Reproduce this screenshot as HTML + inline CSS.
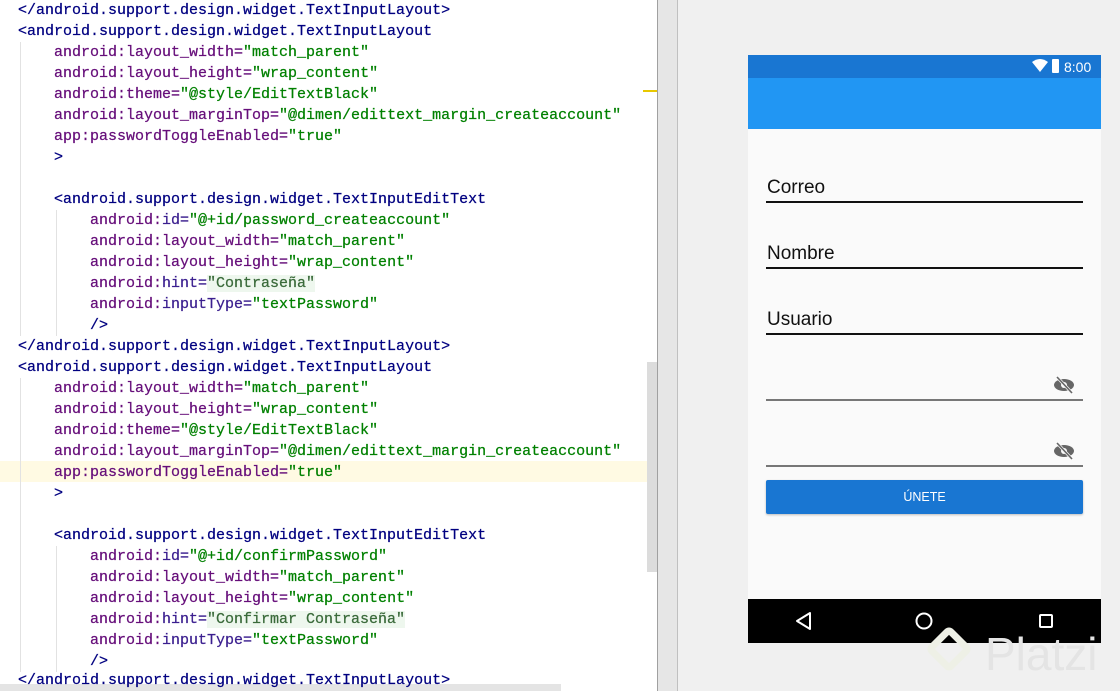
<!DOCTYPE html>
<html><head><meta charset="utf-8"><style>
*{margin:0;padding:0;box-sizing:border-box}
body{width:1120px;height:691px;overflow:hidden;background:#f0f0f0;position:relative;font-family:"Liberation Sans",sans-serif}
#code{position:absolute;left:0;top:0;width:657px;height:691px;background:#fff;overflow:hidden}
.l{position:absolute;left:18px;height:21px;line-height:21px;font-family:"Liberation Mono",monospace;font-size:15px;white-space:pre;color:#000;-webkit-text-stroke:0.25px;z-index:2}
.t{color:#000080}.a{color:#660e7a}.n{color:#3b1f8f}.v{color:#008000}.h{background:#eef7ee;color:#3a6a3a}
.g{position:absolute;width:1px;background:#e2e2e2}
.i1{left:54px}.i2{left:90px}
</style></head><body>
<div id="code">
<div style="position:absolute;left:0;top:461px;width:657px;height:21px;background:#fffae3"></div>
<div class="g" style="left:20px;top:42px;height:294px"></div>
<div class="g" style="left:20px;top:378px;height:294px"></div>
<div class="g" style="left:56px;top:210px;height:126px"></div>
<div class="g" style="left:56px;top:546px;height:126px"></div>
<div style="position:absolute;left:0;top:684px;width:561px;height:7px;background:#e4e4e4"></div>
<div class="l" style="top:0"><span class="t">&lt;/android.support.design.widget.TextInputLayout&gt;</span></div>
<div class="l" style="top:21px"><span class="t">&lt;android.support.design.widget.TextInputLayout</span></div>
<div class="l i1" style="top:42px"><span class="a">android:layout_width=</span><span class="v">"match_parent"</span></div>
<div class="l i1" style="top:63px"><span class="a">android:layout_height=</span><span class="v">"wrap_content"</span></div>
<div class="l i1" style="top:84px"><span class="a">android:theme=</span><span class="v">"@style/EditTextBlack"</span></div>
<div class="l i1" style="top:105px"><span class="a">android:layout_marginTop=</span><span class="v">"@dimen/edittext_margin_createaccount"</span></div>
<div class="l i1" style="top:126px"><span class="a">app:passwordToggleEnabled=</span><span class="v">"true"</span></div>
<div class="l i1" style="top:147px"><span class="t">&gt;</span></div>
<div class="l i1" style="top:189px"><span class="t">&lt;android.support.design.widget.TextInputEditText</span></div>
<div class="l i2" style="top:210px"><span class="a">android:</span><span class="n">id=</span><span class="v">"@+id/password_createaccount"</span></div>
<div class="l i2" style="top:231px"><span class="a">android:layout_width=</span><span class="v">"match_parent"</span></div>
<div class="l i2" style="top:252px"><span class="a">android:layout_height=</span><span class="v">"wrap_content"</span></div>
<div class="l i2" style="top:273px"><span class="a">android:</span><span class="n">hint=</span><span class="v h">"Contraseña"</span></div>
<div class="l i2" style="top:294px"><span class="a">android:</span><span class="n">inputType=</span><span class="v">"textPassword"</span></div>
<div class="l i2" style="top:315px"><span class="t">/&gt;</span></div>
<div class="l" style="top:336px"><span class="t">&lt;/android.support.design.widget.TextInputLayout&gt;</span></div>
<div class="l" style="top:357px"><span class="t">&lt;android.support.design.widget.TextInputLayout</span></div>
<div class="l i1" style="top:378px"><span class="a">android:layout_width=</span><span class="v">"match_parent"</span></div>
<div class="l i1" style="top:399px"><span class="a">android:layout_height=</span><span class="v">"wrap_content"</span></div>
<div class="l i1" style="top:420px"><span class="a">android:theme=</span><span class="v">"@style/EditTextBlack"</span></div>
<div class="l i1" style="top:441px"><span class="a">android:layout_marginTop=</span><span class="v">"@dimen/edittext_margin_createaccount"</span></div>
<div class="l i1" style="top:462px"><span class="a">app:passwordToggleEnabled=</span><span class="v">"true"</span></div>
<div class="l i1" style="top:483px"><span class="t">&gt;</span></div>
<div class="l i1" style="top:525px"><span class="t">&lt;android.support.design.widget.TextInputEditText</span></div>
<div class="l i2" style="top:546px"><span class="a">android:</span><span class="n">id=</span><span class="v">"@+id/confirmPassword"</span></div>
<div class="l i2" style="top:567px"><span class="a">android:layout_width=</span><span class="v">"match_parent"</span></div>
<div class="l i2" style="top:588px"><span class="a">android:layout_height=</span><span class="v">"wrap_content"</span></div>
<div class="l i2" style="top:609px"><span class="a">android:</span><span class="n">hint=</span><span class="v h">"Confirmar Contraseña"</span></div>
<div class="l i2" style="top:630px"><span class="a">android:</span><span class="n">inputType=</span><span class="v">"textPassword"</span></div>
<div class="l i2" style="top:651px"><span class="t">/&gt;</span></div>
<div class="l" style="top:670px"><span class="t">&lt;/android.support.design.widget.TextInputLayout&gt;</span></div>
<div style="position:absolute;left:643px;top:90px;width:14px;height:2px;background:#e8c800"></div>
<div style="position:absolute;left:647px;top:362px;width:10px;height:210px;background:#dcdcdc"></div>
</div>
<div style="position:absolute;left:657px;top:0;width:1px;height:691px;background:#a0a0a0"></div>
<div style="position:absolute;left:658px;top:0;width:19px;height:691px;background:#e6e6e6"></div>
<div style="position:absolute;left:677px;top:0;width:1px;height:691px;background:#c0c0c0"></div>

<div style="position:absolute;left:748px;top:55px;width:353px;height:588px;background:#fafafa">
  <div style="position:absolute;left:0;top:0;width:353px;height:23px;background:#1976d2"></div>
  <svg style="position:absolute;left:283px;top:4px" width="20" height="16" viewBox="0 0 20 16"><path d="M1 3 Q9 -3 17 3 L9 13 Z" fill="#fff"/></svg>
  <div style="position:absolute;left:304px;top:4px;width:7px;height:14px;background:#fff;border-radius:1px"></div>
  <div style="position:absolute;left:316px;top:2px;color:#fff;font-size:14px;line-height:20px">8:00</div>
  <div style="position:absolute;left:0;top:23px;width:353px;height:51px;background:#2196f3"></div>
  <div style="position:absolute;left:19px;top:122px;font-size:19px;color:#111">Correo</div>
  <div style="position:absolute;left:18px;top:146px;width:317px;height:1.5px;background:#111"></div>
  <div style="position:absolute;left:19px;top:188px;font-size:19px;color:#111">Nombre</div>
  <div style="position:absolute;left:18px;top:212px;width:317px;height:1.5px;background:#111"></div>
  <div style="position:absolute;left:19px;top:254px;font-size:19px;color:#111">Usuario</div>
  <div style="position:absolute;left:18px;top:278px;width:317px;height:1.5px;background:#111"></div>
  <svg style="position:absolute;left:305px;top:320px" width="22" height="20" viewBox="0 0 22 20"><ellipse cx="11" cy="10" rx="10" ry="6" fill="#666"/><circle cx="11" cy="10" r="3" fill="#fafafa"/><line x1="4" y1="2" x2="19" y2="18" stroke="#fafafa" stroke-width="3"/><line x1="4" y1="2" x2="19" y2="18" stroke="#666" stroke-width="1.6"/></svg>
  <div style="position:absolute;left:18px;top:344px;width:317px;height:2px;background:#777"></div>
  <svg style="position:absolute;left:305px;top:386px" width="22" height="20" viewBox="0 0 22 20"><ellipse cx="11" cy="10" rx="10" ry="6" fill="#666"/><circle cx="11" cy="10" r="3" fill="#fafafa"/><line x1="4" y1="2" x2="19" y2="18" stroke="#fafafa" stroke-width="3"/><line x1="4" y1="2" x2="19" y2="18" stroke="#666" stroke-width="1.6"/></svg>
  <div style="position:absolute;left:18px;top:410px;width:317px;height:2px;background:#777"></div>
  <div style="position:absolute;left:18px;top:425px;width:317px;height:34px;background:#1976d2;border-radius:2px;box-shadow:0 1px 2px rgba(0,0,0,.25);color:#fff;font-size:12.5px;text-align:center;line-height:34px">ÚNETE</div>
  <div style="position:absolute;left:0;top:544px;width:353px;height:44px;background:#000"></div>
  <svg style="position:absolute;left:0;top:544px" width="353" height="44" viewBox="0 0 353 44"><path d="M62 14 L49 22 L62 30 Z" fill="none" stroke="#fff" stroke-width="2" stroke-linejoin="round"/><circle cx="176" cy="22" r="7.5" fill="none" stroke="#fff" stroke-width="2"/><rect x="292" y="16" width="12" height="12" rx="1" fill="none" stroke="#fff" stroke-width="2"/></svg>
</div>
<div style="position:absolute;left:985px;top:628px;font-size:46px;color:#e4e4e4;line-height:52px">Platzi</div>
<div style="position:absolute;left:932px;top:632px;width:34px;height:34px;border:7px solid #eef0e6;transform:rotate(45deg);border-radius:6px"></div>
</body></html>
